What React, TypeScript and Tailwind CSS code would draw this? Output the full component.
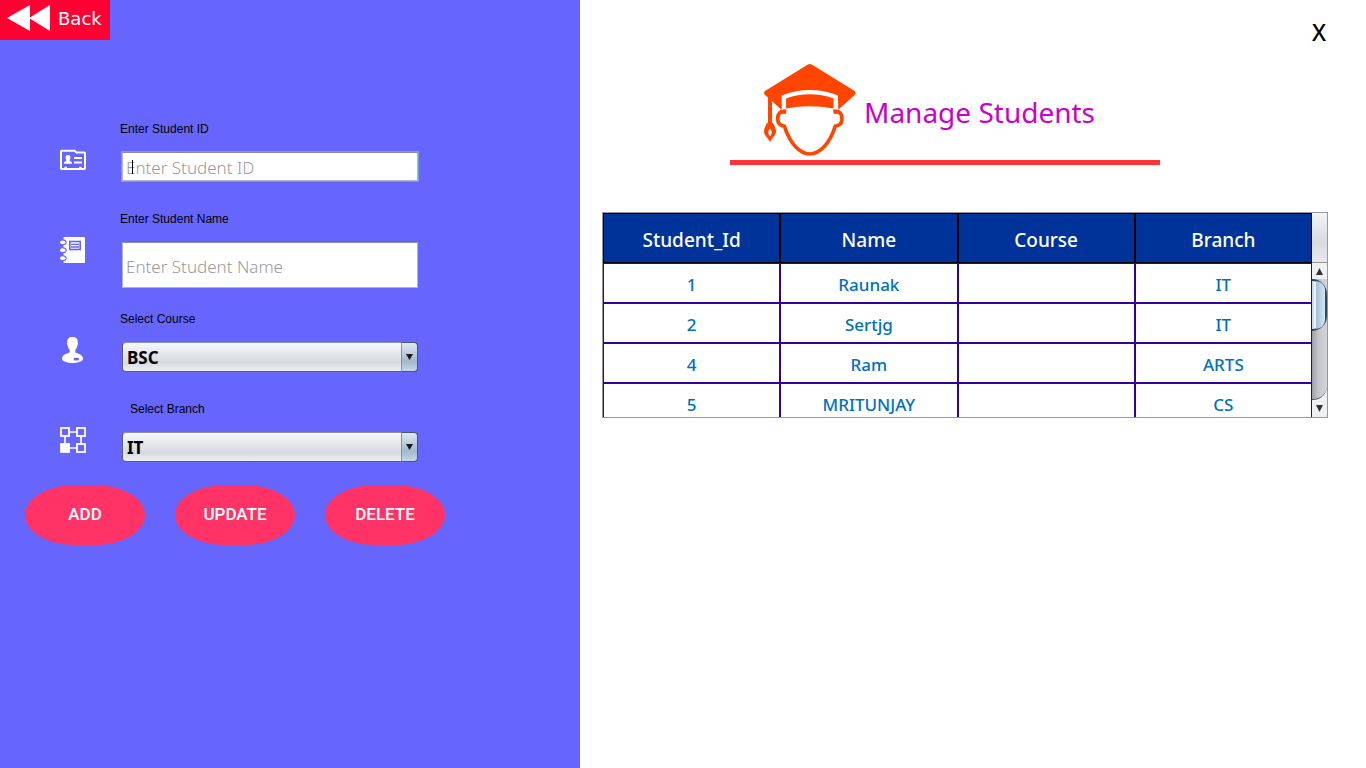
import React from "react";

const students = [
  { id: 1, name: "Raunak", course: "", branch: "IT" },
  { id: 2, name: "Sertjg", course: "", branch: "IT" },
  { id: 4, name: "Ram", course: "", branch: "ARTS" },
  { id: 5, name: "MRITUNJAY", course: "", branch: "CS" },
];

const columns = ["Student_Id", "Name", "Course", "Branch"];

function RewindIcon() {
  return (
    <svg viewBox="0 0 43 26" className="h-[26px] w-[43px]" fill="#fff" aria-hidden="true">
      <path d="M0 13 23 0V26ZM22 13 43 0V26Z" />
    </svg>
  );
}

function IdCardIcon() {
  return (
    <svg viewBox="0 0 26 26" className="size-[26px]" aria-hidden="true">
      <path
        d="M1.8 3.8H14.5L16.5 5.6H24.2Q25 5.6 25 6.4V21.2Q25 22 24.2 22H1.8Q1 22 1 21.2V4.6Q1 3.8 1.8 3.8Z"
        fill="none"
        stroke="#fff"
        strokeWidth="2"
      />
      <path
        d="M8 8C9.7 8 10.5 9.2 10.5 10.6C10.5 12 9.8 12.6 9.5 13.2C9.5 14.2 12.2 14.2 12.2 16.8H3.8C3.8 14.2 6.5 14.2 6.5 13.2C6.2 12.6 5.5 12 5.5 10.6C5.5 9.2 6.3 8 8 8Z"
        fill="#fff"
      />
      <path d="M14 11H22M14 15.5H22" stroke="#fff" strokeWidth="2" />
      <path d="M4.5 20.6H7M19 20.6H21.5" stroke="#fff" strokeWidth="1.6" />
    </svg>
  );
}

function NotebookIcon() {
  return (
    <svg viewBox="0 0 26 26" className="size-[26px]" aria-hidden="true">
      <rect x="3.5" y="0" width="21.5" height="26" rx="0.8" fill="#fff" />
      <g fill="none" stroke="#6666ff" strokeWidth="1.6">
        <rect x="9.8" y="4.5" width="10.4" height="8" />
        <path d="M11 7.3H19M11 10H19" strokeWidth="1.3" />
      </g>
      {[5.3, 13.2, 21.2].map((y) => (
        <g key={y}>
          <ellipse cx="3" cy={y} rx="3.6" ry="3" fill="#6666ff" />
          <ellipse cx="2.7" cy={y} rx="2.7" ry="1.9" fill="#fff" />
        </g>
      ))}
    </svg>
  );
}

function PersonIcon() {
  return (
    <svg viewBox="0 0 26 26" className="size-[26px]" aria-hidden="true">
      <path
        d="M12.5 0C16.2 0 18 2 17.7 5.5C18.3 6.3 18 8 17.3 8.5C17 10.5 16 12 15.3 13V15.4C17 16.4 23 17 23 21.8C23 24.4 18 26 12.5 26C7 26 2 24.4 2 21.8C2 17 8 16.4 9.7 15.4V13C9 12 8 10.5 7.7 8.5C7 8 6.7 6.3 7.3 5.5C7 2 8.8 0 12.5 0Z"
        fill="#fff"
      />
      <rect x="13.8" y="20.8" width="5" height="2.6" fill="#6666ff" />
    </svg>
  );
}

function BranchIcon() {
  return (
    <svg viewBox="0 0 26 26" className="size-[26px]" fill="none" stroke="#fff" strokeWidth="1.8" aria-hidden="true">
      <rect x="1" y="1" width="8" height="8" />
      <rect x="17" y="1" width="8" height="8" />
      <rect x="17" y="17" width="8" height="8" />
      <rect x="1" y="17" width="8" height="8" fill="#fff" />
      <path d="M9 5H17M9 21H17M5 9V17M21 9V17" strokeWidth="1.6" />
    </svg>
  );
}

function GraduateIcon() {
  return (
    <svg viewBox="102 41 275 275" className="size-[92px]" aria-hidden="true">
      <g fill="#ff4500">
        <path d="M232 43Q239 39 246 43L373 122Q379 128 373 134L324 178L323 135Q239 103 155 135V178L126 152V215C132 220 138 234 138 243C138 254 127 262 120 274C113 262 102 254 102 243C102 234 108 220 114 215V141L105 134Q99 128 105 122Z" />
        <path d="M168 144Q239 119 310 144V174Q239 160 168 174Z" />
        <path d="M150 180L168 176V190H150ZM328 180L310 176V190H328Z" />
      </g>
      <path d="M120 234C127 242 127 249 120 257C113 249 113 242 120 234Z" fill="#fff" />
      <path
        d="M168 184C150 179 143 190 143 205C143 219 151 226 163 227C180 280 210 310 239 310C268 310 298 280 315 227C327 226 335 219 335 205C335 190 328 179 310 184"
        fill="none"
        stroke="#ff4500"
        strokeWidth="11"
      />
    </svg>
  );
}

function Field({
  id,
  label,
  icon,
  className,
  labelClass = "",
  children,
}: {
  id: string;
  label: string;
  icon: React.ReactNode;
  className: string;
  labelClass?: string;
  children: React.ReactNode;
}) {
  return (
    <div className={`flex gap-[34px] ${className}`}>
      <div className="pt-[26px]">{icon}</div>
      <div className="flex w-[298px] flex-col gap-[15px]">
        <label htmlFor={id} className={`font-['Liberation_Sans',Arial,sans-serif] text-[12px] leading-4 text-black ${labelClass}`}>
          {label}
        </label>
        <div className="relative ml-0.5">{children}</div>
      </div>
    </div>
  );
}

const inputClass =
  "block w-full border border-[#b4b4c0] border-t-[#8c8c8c] bg-white px-[3px] pt-0.5 font-['Noto_Sans',sans-serif] text-[17px] font-light text-black outline-none placeholder:text-[#999999]";

function Combo({ id, options }: { id: string; options: string[] }) {
  return (
    <>
      <select
        id={id}
        className="block h-[30px] w-full appearance-none rounded-[4px] border border-[#5c6068] border-t-[#8e929c] bg-linear-to-b from-[#f8f8fa] via-[#d6d9df] via-70% to-[#f0f1f4] pt-0.5 pr-5 pl-1 font-['Noto_Sans',sans-serif] text-[17px] leading-6 font-bold text-black outline-none"
      >
        {options.map((o) => (
          <option key={o}>{o}</option>
        ))}
      </select>
      <span className="pointer-events-none absolute inset-y-0 right-0 flex w-[17px] items-center justify-center rounded-r-[4px] border border-[#46586a] border-l-[#7d95a8] bg-linear-to-b from-[#dfeaf2] via-[#a3b8cb] via-65% to-[#c4d8e8]">
        <svg viewBox="0 0 7 6" className="h-[6px] w-[7px]" fill="#1a1a1a" aria-hidden="true">
          <path d="M0 0H7L3.5 6Z" />
        </svg>
      </span>
    </>
  );
}

function ScrollBar() {
  return (
    <div className="flex flex-1 flex-col overflow-hidden bg-[#eef0f2]">
      <button type="button" aria-label="Scroll up" className="flex h-4 items-center justify-center">
        <svg viewBox="0 0 7 7" className="size-[7px]" fill="#333" aria-hidden="true">
          <path d="M3.5 0 7 7H0Z" />
        </svg>
      </button>
      <div className="flex-1 overflow-hidden rounded-br-[14px] border-b border-[#55585e] bg-linear-to-r from-[#9c9ea4] via-[#c4c5ca] via-40% to-[#d4d5da]">
        <div className="h-[52px] rounded-r-[16px] border-2 border-l-0 border-[#2f4a63] bg-linear-to-r from-[#c9dbe8] from-10% via-[#f0f6fa] via-20% to-[#cfe3f1]">
          <div className="ml-1 h-full rounded-r-[14px] bg-linear-to-r from-[#a5bfd4] to-[#d3e8f5]" />
        </div>
      </div>
      <button type="button" aria-label="Scroll down" className="flex h-[17px] items-center justify-center">
        <svg viewBox="0 0 7 7" className="size-[7px]" fill="#333" aria-hidden="true">
          <path d="M0 0H7L3.5 7Z" />
        </svg>
      </button>
    </div>
  );
}

const actionClass =
  "h-[60px] w-[120px] rounded-[50px/30px] bg-[#ff3366] font-['Roboto',sans-serif] text-[17px] font-medium text-white";

export default function App() {
  return (
    <div className="flex min-h-screen bg-white">
      <aside className="w-[580px] shrink-0 bg-[#6666ff]">
        <button type="button" className="flex h-10 w-[110px] items-center gap-2 bg-[#ff0033] pb-1 pl-[7px]">
          <RewindIcon />
          <span className="pt-0.5 font-['DejaVu_Sans',Verdana,sans-serif] text-[18px] leading-6 text-white">Back</span>
        </button>
        <form className="pt-[81px]" onSubmit={(e) => e.preventDefault()}>
          <div className="pl-[60px]">
            <Field id="sid" label="Enter Student ID" icon={<IdCardIcon />} className="h-[90px]">
              <input id="sid" placeholder="Enter Student ID" className={`h-[29px] ring ring-[#6ea3d8] ${inputClass}`} />
              <span className="absolute top-2 left-[10px] h-[14px] w-px bg-black" />
            </Field>
            <Field id="sname" label="Enter Student Name" icon={<NotebookIcon />} className="h-[100px]">
              <input id="sname" placeholder="Enter Student Name" className={`h-[46px] ${inputClass}`} />
            </Field>
            <Field id="course" label="Select Course" icon={<PersonIcon />} className="h-[90px]">
              <Combo id="course" options={["BSC"]} />
            </Field>
            <Field id="branch" label="Select Branch" icon={<BranchIcon />} className="h-[84px]" labelClass="pl-[10px]">
              <Combo id="branch" options={["IT", "CS", "ARTS"]} />
            </Field>
          </div>
          <div className="flex gap-[30px] pl-[25px]">
            <button type="button" className={actionClass}>ADD</button>
            <button type="button" className={actionClass}>UPDATE</button>
            <button type="button" className={actionClass}>DELETE</button>
          </div>
        </form>
      </aside>

      <main className="min-w-0 flex-1 pr-[38px] pl-[22px] font-['Noto_Sans',sans-serif]">
        <div className="flex h-16 justify-end pt-4">
          <button type="button" aria-label="Close" className="h-8 px-0.5 text-[23px] leading-8 font-medium text-black">X</button>
        </div>
        <header className="ml-32 flex h-[101px] w-[430px] items-start gap-2 border-b-[5px] border-[#ff3333] pl-[34px]">
          <GraduateIcon />
          <h1 className="pt-7 text-[28px] leading-10 font-normal whitespace-nowrap text-[#cc00cc]">Manage Students</h1>
        </header>

        <div className="mt-[47px] flex h-[206px] overflow-hidden border border-[#9297a1]">
          <div className="min-w-0 flex-1 overflow-hidden">
            <table className="w-full table-fixed border-separate border-spacing-0 text-center">
              <thead>
                <tr>
                  {columns.map((c) => (
                    <th key={c} className="h-[50px] border border-black bg-[#003399] p-0 pt-1 text-[19px] leading-6 font-medium text-white">
                      {c}
                    </th>
                  ))}
                </tr>
              </thead>
              <tbody>
                {students.map((s) => (
                  <tr key={s.id}>
                    {[s.id, s.name, s.course, s.branch].map((v, i) => (
                      <td key={i} className="h-10 border border-[#330099] p-0 pt-1 text-[17px] leading-6 font-medium text-[#0070c0]">
                        {v}
                      </td>
                    ))}
                  </tr>
                ))}
              </tbody>
            </table>
          </div>
          <div className="flex w-[15px] shrink-0 flex-col">
            <div className="h-[50px] border-b border-[#9297a1] bg-linear-to-b from-[#f2f3f5] via-[#d9dbe1] via-60% to-[#e6e8ec]" />
            <ScrollBar />
          </div>
        </div>
      </main>
    </div>
  );
}
